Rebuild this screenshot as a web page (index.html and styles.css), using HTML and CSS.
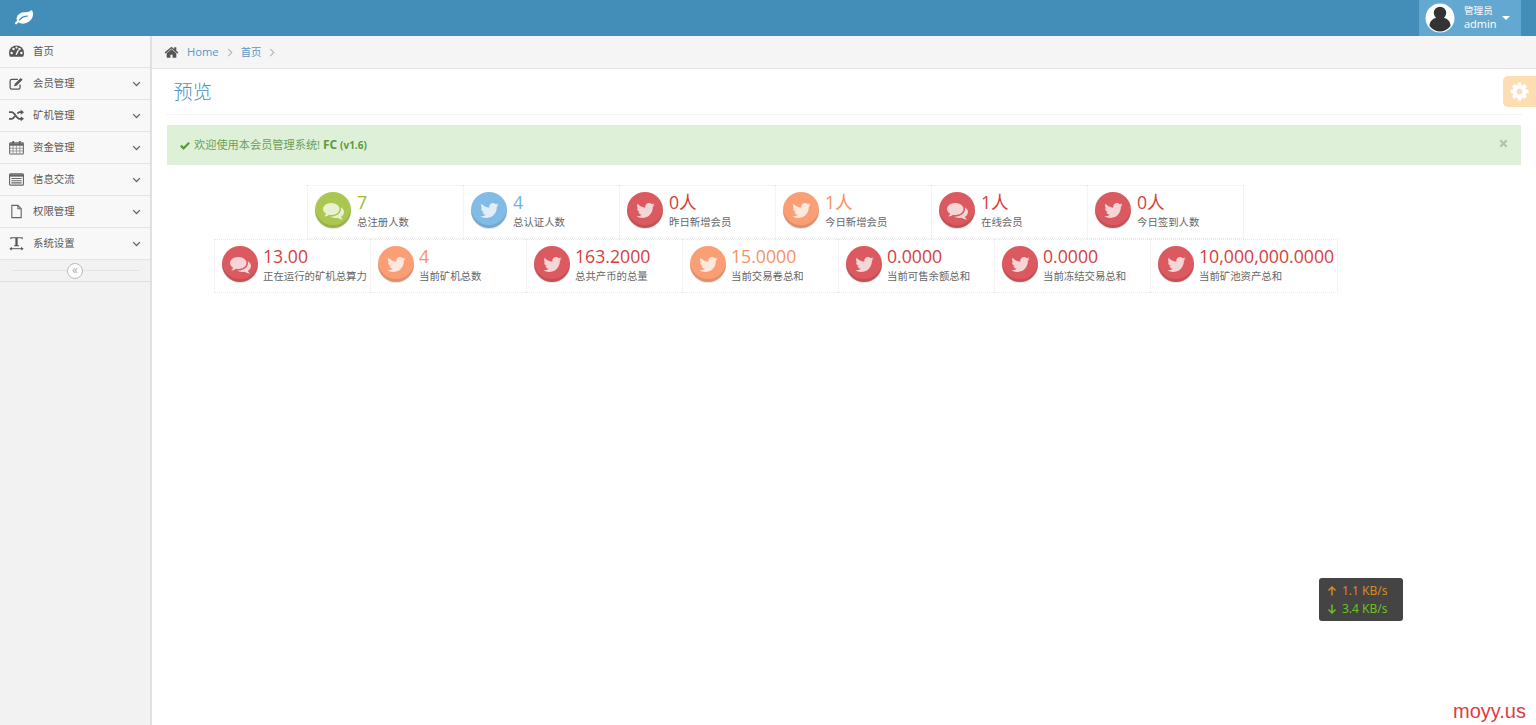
FILE: index.html
```html
<!DOCTYPE html>
<html lang="zh-CN">
<head>
<meta charset="utf-8">
<title>预览</title>
<link rel="stylesheet" href="styles.css">
</head>
<body>
<svg class="defs" width="0" height="0">
<symbol id="i-twitter" viewBox="0 0 1792 1792"><path d="M1684 408q-67 98-162 168 1 14 1 42 0 130-38 259.5t-115.5 248.5-184.5 210.5-258 146-323 54.5q-271 0-496-145 35 4 78 4 225 0 401-138-105-2-188-64.5t-114-159.5q33 5 61 5 43 0 85-11-112-23-185.5-111.5t-73.5-205.5v-4q68 38 146 41-66-44-105-115t-39-154q0-88 44-163 121 149 294.5 238.5t371.5 99.5q-8-38-8-74 0-134 94.5-228.5t228.5-94.5q140 0 236 102 109-21 205-78-37 115-142 178 97-11 186-51z"/></symbol>
<symbol id="i-comments" viewBox="0 0 1792 1792"><path d="M1408 768q0 139-94 257t-256.500 186.500-353.500 68.500q-86 0-176-16-124 88-278 128-36 9-86 14h-3q-11 0-20.500-8t-11.500-21q-1-3-1-6.500t.5-6.500 2-6l2.500-5 3.500-5.500 4-5 4.500-5 4-4.500q5-6 23-25t26-29.500 22.500-29 25-38.500 20.500-44q-124-72-195-177t-71-224q0-139 94-257t256.500-186.500 353.500-68.500 353.500 68.500 256.500 186.500 94 257zm384 256q0 120-71 224.500t-195 176.500q10 24 20.500 44t25 38.500 22.500 29 26 29.500 23 25q1 1 4 4.500t4.500 5 4 5 3.500 5.500l2.500 5 2 6 .5 6.500-1 6.500q-3 14-13 22t-22 7q-50-7-86-14-154-40-278-128-90 16-176 16-271 0-472-132 58 4 88 4 161 0 309-45t264-129q125-92 192-212t67-254q0-77-23-152 129 71 204 178t75 230z"/></symbol>
<symbol id="i-down" viewBox="0 0 12 8"><path d="M1.500 1.500 6 6l4.500-4.500" fill="none" stroke="currentColor" stroke-width="1.700"/></symbol>
</svg>

<header class="topbar">
  <svg class="logo" viewBox="0 0 1792 1792"><path d="M1280 704q0-26-19-45t-45-19q-172 0-318 49.500t-259.500 134-235.500 219.500q-19 21-19 45 0 26 19 45t45 19q24 0 45-19 27-24 74-71t67-66q137-124 268.500-176t313.500-52q26 0 45-19t19-45zm512-198q0 95-20 193-46 224-184.500 383t-357.500 268q-214 108-438 108-148 0-286-47-15-5-88-42t-96-37q-16 0-39.500 32t-45 70-52.500 70-60 32q-30 0-51-11t-31-24-27-42q-2-4-6-11t-5.500-10-3-9.500-1.500-13.500q0-35 31-73.500t68-65.500 68-56 31-48q0-4-14-38t-16-44q-9-51-9-104 0-115 43.500-220t119-184.500 170.500-139 204-95.500q55-18 145-25.500t179.500-9 178.500-6 163.500-24 113.500-56.500l29.500-29.500 29.500-28 27-20 36.500-16 43.500-4.500q39 0 70.500 46t47.500 112 24 124 8 96z"/></svg>
  <div class="user">
    <svg class="avatar" viewBox="0 0 30 30"><circle cx="15" cy="15" r="14.500" fill="#fff"/><circle cx="15" cy="10" r="6.200" fill="#333"/><path d="M4.500 23c0-6 4.500-8.500 10.500-8.500s10.500 2.500 10.500 8.500c-2.500 3.500-6.500 5.500-10.500 5.500S7 26.500 4.500 23z" fill="#333"/></svg>
    <div class="user-text"><span class="role">管理员</span><span class="name">admin</span></div>
    <span class="caret"></span>
  </div>
</header>

<div class="layout">
  <aside class="sidebar">
    <nav>
      <a class="nav-item"><svg class="nav-icon" viewBox="0 0 16 16"><path d="M0 9.500a8 8 0 0 1 16 0c0 1.700-.4 3-1.100 4H1.100C.4 12.500 0 11.200 0 9.500z" fill="#555"/><circle cx="2.800" cy="9.500" r="1.300" fill="#f8f8f8"/><circle cx="13.200" cy="9.500" r="1.300" fill="#f8f8f8"/><circle cx="4.800" cy="5.300" r="1.300" fill="#f8f8f8"/><circle cx="8" cy="3.800" r="1.200" fill="#f8f8f8"/><circle cx="11.200" cy="5.300" r="1.300" fill="#f8f8f8"/><path d="M7.600 11.500 10 6.500" stroke="#f8f8f8" stroke-width="1.500"/></svg><span class="nav-label">首页</span></a>
      <a class="nav-item"><svg class="nav-icon" viewBox="0 0 16 16"><path d="M9.500 3.500H3A1.800 1.800 0 0 0 1.200 5.300v7A1.800 1.800 0 0 0 3 14.100h7a1.800 1.800 0 0 0 1.800-1.800V9" fill="none" stroke="#555" stroke-width="1.300"/><path d="M6 8.500 12.500 2l2 2L8 10.500l-2.500.5z" fill="#555"/></svg><span class="nav-label">会员管理</span><svg class="chev"><use href="#i-down"/></svg></a>
      <a class="nav-item"><svg class="nav-icon" viewBox="0 0 16 16"><path d="M0 4.500h3c3 0 5 7 8 7h2M0 11.500h3c1.400 0 2.400-1.400 3.300-2.700M9 6c.6-.8 1.300-1.500 2-1.500h2" fill="none" stroke="#555" stroke-width="1.900"/><path d="M12.500 1.800 16 4.500l-3.500 2.700zM12.500 8.800l3.500 2.700-3.500 2.700z" fill="#555"/></svg><span class="nav-label">矿机管理</span><svg class="chev"><use href="#i-down"/></svg></a>
      <a class="nav-item"><svg class="nav-icon" viewBox="0 0 16 16"><path d="M1.500 3h13a.8.8 0 0 1 .8.800v10.400a.8.8 0 0 1-.8.800h-13a.8.8 0 0 1-.8-.8V3.800a.8.800 0 0 1 .8-.8z" fill="none" stroke="#666" stroke-width="1.100"/><path d="M.7 3.500h14.600V6H.7zM3.500 1h2v3.500h-2zM10.500 1h2v3.500h-2z" fill="#666"/><path d="M4.300 6v8.500M7.900 6v8.500M11.500 6v8.500M1 8.800h14M1 11.700h14" stroke="#777" stroke-width=".7"/></svg><span class="nav-label">资金管理</span><svg class="chev"><use href="#i-down"/></svg></a>
      <a class="nav-item"><svg class="nav-icon" viewBox="0 0 16 16"><rect x=".6" y="2" width="14.800" height="12" rx="1" fill="none" stroke="#666" stroke-width="1.200"/><path d="M.6 2.500h14.800v2.500H.6z" fill="#666"/><path d="M2.500 7h11M2.500 9.300h11M2.500 11.600h11" stroke="#666" stroke-width="1.100"/></svg><span class="nav-label">信息交流</span><svg class="chev"><use href="#i-down"/></svg></a>
      <a class="nav-item"><svg class="nav-icon" viewBox="0 0 16 16"><path d="M3 1.500h6.500l3.500 3.500v9.500H3zM9.500 1.500V5H13" fill="none" stroke="#666" stroke-width="1.200"/></svg><span class="nav-label">权限管理</span><svg class="chev"><use href="#i-down"/></svg></a>
      <a class="nav-item"><svg class="nav-icon" viewBox="0 0 16 16"><path d="M1.500 3.500V1.200h13v2.300h-.8c-.2-.7-.4-1-1.200-1H9.200v7.200l1.400.3v.8H5.400V10l1.400-.3V2.500H3.500c-.8 0-1 .3-1.200 1z" fill="#555"/><path d="M1 13.500h14" stroke="#555" stroke-width="1"/><path d="M3 11.500 .5 13.500 3 15.500zM13 11.500l2.500 2L13 15.500z" fill="#555"/></svg><span class="nav-label">系统设置</span><svg class="chev"><use href="#i-down"/></svg></a>
    </nav>
    <div class="collapse"><span class="collapse-btn">«</span></div>
  </aside>

  <main class="main">
    <div class="crumbs">
      <svg class="home" viewBox="0 0 1792 1792"><path d="M1472 992v480q0 26-19 45t-45 19h-384v-384h-256v384h-384q-26 0-45-19t-19-45v-480q0-1 .5-3t.5-3l575-474 575 474q1 2 1 6zm223-69l-62 74q-8 9-21 11h-3q-13 0-21-7l-692-577-692 577q-12 8-24 7-13-2-21-11l-62-74q-8-10-7-23.500t11-21.500l719-599q32-26 76-26t76 26l244 204v-195q0-14 9-23t23-9h192q14 0 23 9t9 23v408l219 182q10 8 11 21.500t-7 23.500z"/></svg>
      <a class="crumb">Home</a><svg class="sep" viewBox="0 0 6 10"><path d="M1 1l4 4-4 4" fill="none" stroke="#b2b6bf" stroke-width="1.200"/></svg>
      <a class="crumb crumb-cjk">首页</a><svg class="sep" viewBox="0 0 6 10"><path d="M1 1l4 4-4 4" fill="none" stroke="#b2b6bf" stroke-width="1.200"/></svg>
    </div>
    <div class="content">
      <h1 class="page-title">预览</h1>
      <div class="alert">
        <svg class="check" viewBox="0 0 12 10"><path d="M1 5.200 4.300 8.400 11 1.600" fill="none" stroke="#5a9a3f" stroke-width="2.700"/></svg>
        <span class="alert-text">欢迎使用本会员管理系统! <b class="fc">FC</b> <b class="ver">(v1.6)</b></span>
        <svg class="close" viewBox="0 0 10 10"><path d="M1.500 1.500l7 7M8.500 1.500l-7 7" stroke="#b3c0ac" stroke-width="2.400"/></svg>
      </div>
      <div class="stats">
        <div class="row row-first">
          <div class="box green"><div class="badge"><svg><use href="#i-comments"/></svg></div><div class="info"><span class="val">7</span><span class="lbl">总注册人数</span></div></div>
          <div class="box blue"><div class="badge"><svg><use href="#i-twitter"/></svg></div><div class="info"><span class="val">4</span><span class="lbl">总认证人数</span></div></div>
          <div class="box red"><div class="badge"><svg><use href="#i-twitter"/></svg></div><div class="info"><span class="val">0人</span><span class="lbl">昨日新增会员</span></div></div>
          <div class="box orange"><div class="badge"><svg><use href="#i-twitter"/></svg></div><div class="info"><span class="val">1人</span><span class="lbl">今日新增会员</span></div></div>
          <div class="box red"><div class="badge"><svg><use href="#i-comments"/></svg></div><div class="info"><span class="val">1人</span><span class="lbl">在线会员</span></div></div>
          <div class="box red"><div class="badge"><svg><use href="#i-twitter"/></svg></div><div class="info"><span class="val">0人</span><span class="lbl">今日签到人数</span></div></div>
        </div>
        <div class="row row-second">
          <div class="box red"><div class="badge"><svg><use href="#i-comments"/></svg></div><div class="info"><span class="val">13.00</span><span class="lbl">正在运行的矿机总算力</span></div></div>
          <div class="box orange"><div class="badge"><svg><use href="#i-twitter"/></svg></div><div class="info"><span class="val">4</span><span class="lbl">当前矿机总数</span></div></div>
          <div class="box red"><div class="badge"><svg><use href="#i-twitter"/></svg></div><div class="info"><span class="val">163.2000</span><span class="lbl">总共产币的总量</span></div></div>
          <div class="box orange"><div class="badge"><svg><use href="#i-twitter"/></svg></div><div class="info"><span class="val">15.0000</span><span class="lbl">当前交易卷总和</span></div></div>
          <div class="box red"><div class="badge"><svg><use href="#i-twitter"/></svg></div><div class="info"><span class="val">0.0000</span><span class="lbl">当前可售余额总和</span></div></div>
          <div class="box red"><div class="badge"><svg><use href="#i-twitter"/></svg></div><div class="info"><span class="val">0.0000</span><span class="lbl">当前冻结交易总和</span></div></div>
          <div class="box red wide"><div class="badge"><svg><use href="#i-twitter"/></svg></div><div class="info"><span class="val">10,000,000.0000</span><span class="lbl">当前矿池资产总和</span></div></div>
        </div>
      </div>
    </div>
  </main>
</div>

<div class="gear-tab"><svg viewBox="0 0 1792 1792"><path d="M1152 896q0-106-75-181t-181-75-181 75-75 181 75 181 181 75 181-75 75-181zm512-109v222q0 12-8 23t-20 13l-185 28q-19 54-39 91 35 50 107 138 10 12 10 25t-9 23q-27 37-99 108t-94 71q-12 0-26-9l-138-108q-44 23-91 38-16 136-29 186-7 28-36 28h-222q-14 0-24.500-8.500t-11.500-21.500l-28-184q-49-16-90-37l-141 107q-10 9-25 9-14 0-25-11-126-114-165-168-7-10-7-23 0-12 8-23 15-21 51-66.500t54-70.500q-27-50-41-99l-183-27q-13-2-21-12.500t-8-23.500v-222q0-12 8-23t19-13l186-28q14-46 39-92-40-57-107-138-10-12-10-24 0-10 9-23 26-36 98.500-107.500t94.500-71.500q13 0 26 10l138 107q44-23 91-38 16-136 29-186 7-28 36-28h222q14 0 24.500 8.500t11.500 21.500l28 184q49 16 90 37l142-107q9-9 24-9 13 0 25 10 129 119 165 170 7 8 7 22 0 12-8 23-15 21-51 66.500t-54 70.500q26 50 41 98l183 28q13 2 21 12.500t8 23.500z"/></svg></div>

<div class="speed">
  <div class="up"><svg class="arrow" viewBox="0 0 10 10"><path d="M5 9.500V1M1.500 4.500 5 1l3.500 3.500" fill="none" stroke="currentColor" stroke-width="1.500"/></svg><span>1.1 KB/s</span></div>
  <div class="down"><svg class="arrow" viewBox="0 0 10 10"><path d="M5 .5V9M1.500 5.500 5 9l3.500-3.500" fill="none" stroke="currentColor" stroke-width="1.500"/></svg><span>3.4 KB/s</span></div>
</div>
<div class="mark">moyy.us</div>
</body>
</html>
```
FILE: styles.css
```css
* { box-sizing: border-box; }
html, body { height: 100%; }
body {
  margin: 0;
  overflow: hidden;
  background: #fff;
  color: #393939;
  font-family: "Open Sans", "Noto Sans CJK SC", sans-serif;
  font-size: 10.4px;
}
.defs { position: absolute; }
.topbar {
  height: 36px;
  background: #438eb9;
  display: flex;
  align-items: center;
  justify-content: space-between;
  padding: 0 15px;
}
.logo { width: 18px; height: 18px; fill: #fff; }
.user {
  width: 102px;
  height: 36px;
  background: #62a8d1;
  display: flex;
  align-items: center;
  padding-left: 6px;
  color: #fff;
}
.avatar { width: 30px; height: 30px; flex: none; }
.user-text {
  display: flex;
  flex-direction: column;
  margin: -2px 0 0 9px;
  line-height: 13px;
}
.role { font-size: 9.6px; }
.name { font-size: 11px; }
.caret {
  margin-left: 5px;
  border-style: solid;
  border-width: 4.500px 4.500px 0;
  border-color: #fff transparent transparent;
}
.layout { display: flex; height: 689px; }
.sidebar {
  width: 152px;
  flex: none;
  background: #f2f2f2;
  border-right: 2px solid #e0e0e0;
}
.nav-item {
  display: flex;
  align-items: center;
  height: 32px;
  background: #f8f8f8;
  border-bottom: 1px solid #e5e5e5;
  color: #585858;
  font-size: 10.400px;
  padding: 0 8px 0 9px;
}
.nav-icon { width: 15px; height: 15px; flex: none; }
.nav-label { margin: 0 0 2px 9px; flex: 1; }
.chev { width: 9px; height: 6px; color: #666; margin-right: 1px; }
.collapse {
  height: 22px;
  border-bottom: 1px solid #e0e0e0;
  display: flex;
  align-items: center;
  justify-content: center;
  background: linear-gradient(#e3e3e3, #e3e3e3) center / 127px 1px no-repeat;
}
.collapse-btn {
  width: 16px;
  height: 16px;
  border-radius: 50%;
  background: #fff;
  border: 1px solid #bbb;
  color: #aaa;
  font-size: 12px;
  line-height: 12px;
  text-align: center;
}
.main { flex: 1; min-width: 0; }
.crumbs {
  height: 33px;
  background: #f5f5f5;
  border-bottom: 1px solid #e5e5e5;
  display: flex;
  align-items: center;
  padding-left: 12px;
  font-size: 11.200px;
}
.home { width: 15px; height: 15px; fill: #555; margin-right: 8px; }
.crumb { color: #5c97c4; margin-top: -1px; }
.crumb-cjk { font-size: 10.400px; }
.sep { width: 6px; height: 9px; margin: 0 8px; }
.content { padding: 0 15px; }
.page-title {
  margin: 0 0 10px;
  height: 46px;
  padding: 7px 0 0 6.500px;
  font-weight: 300;
  font-size: 19.200px;
  line-height: 32px;
  color: #4c8fc0;
  border-bottom: 1px dotted #e8e8e8;
}
.alert {
  height: 40px;
  background: #dff0d8;
  display: flex;
  align-items: center;
  padding: 0 13px;
  color: #6ba057;
  font-size: 11.200px;
}
.check { width: 10px; height: 9px; margin-right: 4px; }
.alert-text { flex: 1; margin-bottom: 2px; font-size: 11.200px; }
.fc { font-size: 12px; color: #5a9a3f; }
.ver { font-size: 10px; color: #5a9a3f; }
.close { width: 9px; height: 9px; margin: -3px 0 0; }
.stats {
  width: 1218px;
  margin-top: 20px;
  display: flex;
  flex-direction: column;
  align-items: center;
}
.row { display: flex; }
.row-first { margin-right: 1px; }
.row-second .info { margin-left: 5px; }
.box {
  width: 156px;
  height: 54px;
  border: 1px dotted #e8e8e8;
  border-right: 0;
  display: flex;
  padding: 6px 0 0 7px;
}
.box:last-child { width: 157px; border-right: 1px dotted #e8e8e8; }
.box.wide { width: 188px; }
.badge {
  width: 36px;
  height: 36px;
  border-radius: 50%;
  flex: none;
  display: flex;
  align-items: center;
  justify-content: center;
  box-shadow: inset 0 -3px 0 rgba(0, 0, 0, .1), 0 1px 1px rgba(0, 0, 0, .12);
}
.badge svg { width: 21px; height: 21px; fill: rgba(255, 255, 255, .75); }
.info { margin: -1px 0 0 6px; display: flex; flex-direction: column; white-space: nowrap; }
.val { font-size: 17.700px; line-height: 22px; }
.lbl { font-size: 10.400px; line-height: 14px; color: #666; margin-top: 2px; }
.green .badge { background: #abc74f; }
.green .val { color: #9abc32; }
.blue .badge { background: #82bce6; }
.blue .val { color: #6fb3e0; }
.red .badge { background: #da5a5f; }
.red .val { color: #d53f40; }
.orange .badge { background: #fa9f75; }
.orange .val { color: #f79263; }
.gear-tab {
  position: absolute;
  top: 76px;
  right: 0;
  width: 33px;
  height: 31px;
  background: #ffddb3;
  border-radius: 5px 0 0 5px;
  display: flex;
  align-items: center;
  justify-content: center;
}
.gear-tab svg { width: 21px; height: 21px; fill: #fff; }
.speed {
  position: absolute;
  left: 1319px;
  top: 578px;
  width: 84px;
  height: 43px;
  background: #444;
  border-radius: 3px;
  padding: 4px 8px;
  font-family: "Noto Sans", sans-serif;
  font-size: 12px;
  line-height: 18px;
}
.speed .arrow { width: 10px; height: 10px; margin-right: 5px; vertical-align: -1px; }
.up { color: #d98a1f; }
.down { color: #6cc024; }
.mark {
  position: absolute;
  right: 10px;
  bottom: 2px;
  font-family: "Liberation Sans", sans-serif;
  font-size: 20px;
  line-height: 24px;
  color: #de3c3f;
}
```
